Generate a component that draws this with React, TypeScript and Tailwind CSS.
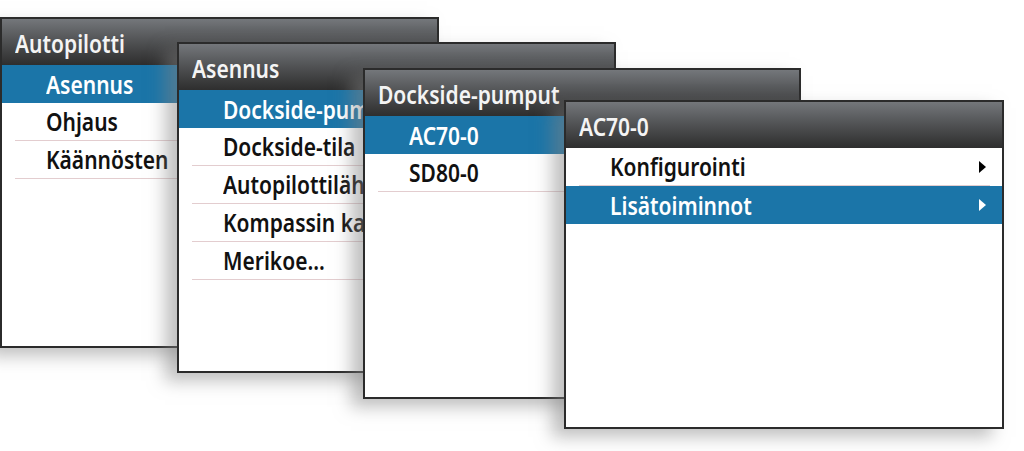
type MenuItem = {
  label: string;
  selected?: boolean;
  arrow?: boolean;
};

interface MenuWindowProps {
  title: string;
  items: MenuItem[];
  className: string;
  // the next window covers the right part, so labels stop at its edge
  clip?: string;
  titleClip?: string;
}

function Arrow({ light }: { light?: boolean }) {
  return (
    <svg width="7" height="12" viewBox="0 0 7 12" className="shrink-0">
      <path d="M0 0 L7 6 L0 12 Z" fill={light ? '#ffffff' : '#000000'} />
    </svg>
  );
}

// the device font is a narrow one, so squeeze Noto Sans a bit
function Label({ text, clip }: { text: string; clip: string }) {
  return (
    <span className={`block overflow-hidden ${clip}`}>
      <span className="inline-block origin-left scale-x-[0.84]">{text}</span>
    </span>
  );
}

function MenuWindow({ title, items, className, clip = '', titleClip = '' }: MenuWindowProps) {
  return (
    <div
      className={`absolute flex flex-col overflow-hidden bg-white border-2 border-[#2b2b2b] shadow-[-12px_8px_16px_rgba(130,130,130,0.5)] ${className}`}
    >
      <div className="h-[46px] shrink-0 flex items-center pl-[13px] pt-[2px] bg-linear-to-b from-[#74777b] to-[#2e2e2e] text-[#f4f4f4] whitespace-nowrap">
        <Label text={title} clip={titleClip} />
      </div>
      {items.map(item =>
        item.selected ? (
          <div
            key={item.label}
            className="h-[38px] shrink-0 flex items-center justify-between pl-[44px] pr-[16px] bg-[#1b75a8] text-white whitespace-nowrap"
          >
            <Label text={item.label} clip={clip} />
            {item.arrow && <Arrow light />}
          </div>
        ) : (
          <div key={item.label} className="shrink-0 flex flex-col">
            <div className="h-[37px] flex items-center justify-between pl-[44px] pr-[16px] text-[#111111] whitespace-nowrap">
              <Label text={item.label} clip={clip} />
              {item.arrow && <Arrow />}
            </div>
            <div className="h-px ml-[13px] mr-[12px] bg-[#e3cdcf]" />
          </div>
        )
      )}
    </div>
  );
}

export default function App() {
  return (
    <div className="relative w-[1024px] h-[451px] overflow-hidden bg-white font-['Noto_Sans',sans-serif] text-[25px] font-semibold leading-[1.3]">
      <MenuWindow
        className="left-[0px] top-[17px] w-[439px] h-[331px]"
        clip="max-w-[124px]"
        title="Autopilotti"
        items={[
          { label: 'Asennus', selected: true },
          { label: 'Ohjaus' },
          { label: 'Käännösten testi' },
        ]}
      />
      <MenuWindow
        className="left-[177px] top-[42px] w-[439px] h-[331px]"
        clip="max-w-[140px]"
        title="Asennus"
        items={[
          { label: 'Dockside-pumput', selected: true },
          { label: 'Dockside-tila' },
          { label: 'Autopilottilähde' },
          { label: 'Kompassin kalibrointi' },
          { label: 'Merikoe...' },
        ]}
      />
      <MenuWindow
        className="left-[363px] top-[68px] w-[438px] h-[331px]"
        clip="max-w-[155px]"
        titleClip="max-w-[186px]"
        title="Dockside-pumput"
        items={[
          { label: 'AC70-0', selected: true },
          { label: 'SD80-0' },
        ]}
      />
      <MenuWindow
        className="left-[564px] top-[100px] w-[440px] h-[329px]"
        title="AC70-0"
        items={[
          { label: 'Konfigurointi', arrow: true },
          { label: 'Lisätoiminnot', selected: true, arrow: true },
        ]}
      />
    </div>
  );
}
